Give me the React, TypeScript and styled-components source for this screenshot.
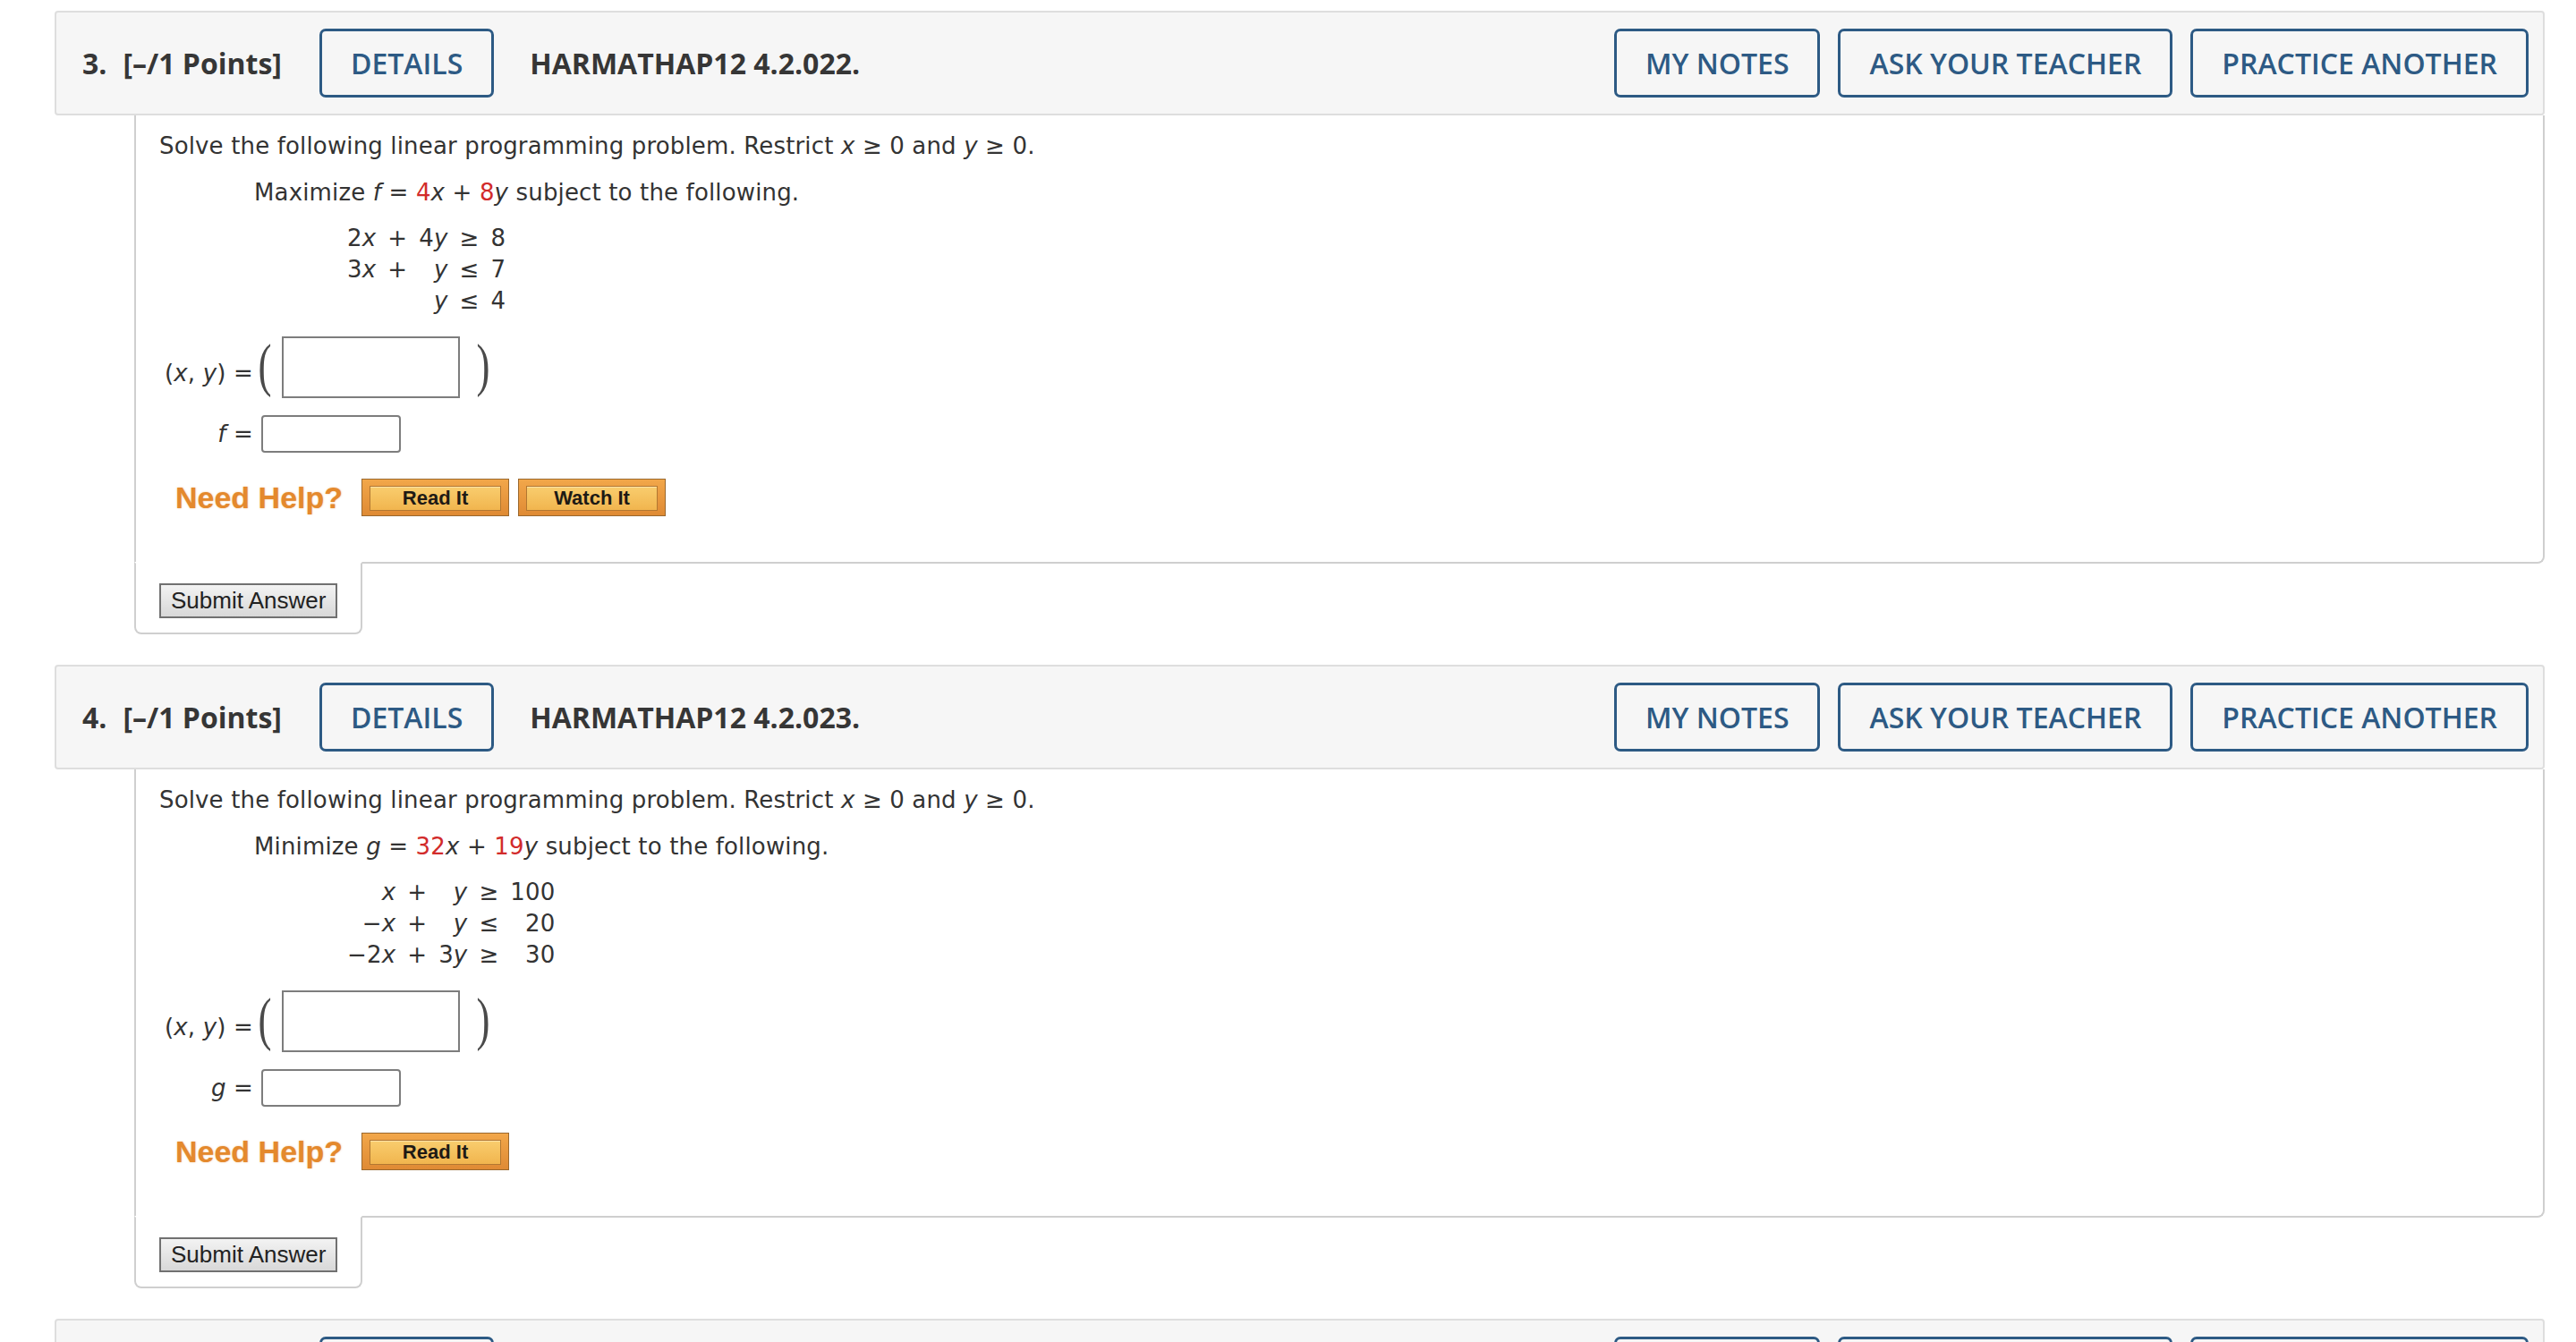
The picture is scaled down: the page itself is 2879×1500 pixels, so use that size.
import styled, { createGlobalStyle } from 'styled-components';

const GlobalStyle = createGlobalStyle`
  *, *::after, *::before {
    box-sizing: border-box;
  }
  html, body {
    margin: 0;
    padding: 0;
    background: #fff;
  }
  body {
    font-family: "DejaVu Sans", Verdana, sans-serif;
    color: #333;
  }
`;

type Row = [string, string, string, string, string];

interface ProblemData {
  number: number;
  code: string;
  goal: string;
  fn: string;
  a: string;
  b: string;
  rows: Row[];
  watch: boolean;
}

const problems: ProblemData[] = [
  {
    number: 3,
    code: 'HARMATHAP12 4.2.022.',
    goal: 'Maximize',
    fn: 'f',
    a: '4',
    b: '8',
    rows: [
      ['2x', '+', '4y', '≥', '8'],
      ['3x', '+', 'y', '≤', '7'],
      ['', '', 'y', '≤', '4'],
    ],
    watch: true,
  },
  {
    number: 4,
    code: 'HARMATHAP12 4.2.023.',
    goal: 'Minimize',
    fn: 'g',
    a: '32',
    b: '19',
    rows: [
      ['x', '+', 'y', '≥', '100'],
      ['−x', '+', 'y', '≤', '20'],
      ['−2x', '+', '3y', '≥', '30'],
    ],
    watch: false,
  },
];

// "−2x" -> "−2" + italic "x"
function Term({ text }: { text: string }) {
  const last = text.slice(-1);
  if (last === 'x' || last === 'y') {
    return (
      <>
        {text.slice(0, -1)}
        <Var>{last}</Var>
      </>
    );
  }
  return <>{text}</>;
}

function QuestionHeader({ number, code }: { number: number; code: string }) {
  return (
    <Header>
      <Number>{number}.</Number>
      <Points>[–/1 Points]</Points>
      <OutlineButton>DETAILS</OutlineButton>
      <Code>{code}</Code>
      <Actions>
        <OutlineButton>MY NOTES</OutlineButton>
        <OutlineButton>ASK YOUR TEACHER</OutlineButton>
        <OutlineButton>PRACTICE ANOTHER</OutlineButton>
      </Actions>
    </Header>
  );
}

function Problem({ data }: { data: ProblemData }) {
  return (
    <Question>
      <QuestionHeader number={data.number} code={data.code} />
      <QuestionBody>
        <Statement>
          Solve the following linear programming problem. Restrict <Var>x</Var> ≥ 0 and{' '}
          <Var>y</Var> ≥ 0.
        </Statement>
        <Goal>
          {data.goal} <Var>{data.fn}</Var> = <Coef>{data.a}</Coef>
          <Var>x</Var> + <Coef>{data.b}</Coef>
          <Var>y</Var> subject to the following.
        </Goal>
        <Constraints>
          {data.rows.map((row, r) =>
            row.map((cell, c) => (
              <Cell key={`${r}-${c}`} $op={c === 1 || c === 3}>
                <Term text={cell} />
              </Cell>
            )),
          )}
        </Constraints>
        <AnswerGrid>
          <Label $drop>
            (<Var>x</Var>, <Var>y</Var>) =
          </Label>
          <PointRow>
            <Paren>(</Paren>
            <PointBox />
            <Paren $close>)</Paren>
          </PointRow>
          <Label>
            <Var>{data.fn}</Var> =
          </Label>
          <ValueBox />
        </AnswerGrid>
        <HelpRow>
          <NeedHelp>Need Help?</NeedHelp>
          <HelpButton>
            <HelpFace>Read It</HelpFace>
          </HelpButton>
          {data.watch && (
            <HelpButton>
              <HelpFace>Watch It</HelpFace>
            </HelpButton>
          )}
        </HelpRow>
      </QuestionBody>
      <SubmitTab>
        <SubmitButton>Submit Answer</SubmitButton>
      </SubmitTab>
    </Question>
  );
}

function App() {
  return (
    <>
      <GlobalStyle />
      <Page>
        {problems.map((p) => (
          <Problem key={p.number} data={p} />
        ))}
        <QuestionHeader number={5} code="HARMATHAP12 4.2.024." />
      </Page>
    </>
  );
}

export default App;

const Page = styled.div`
  padding: 12px 35px 0 61px;
`;

const Question = styled.section`
  margin-bottom: 34px;
`;

const Header = styled.div`
  display: flex;
  align-items: center;
  height: 117px;
  padding: 0 16px 0 29px;
  background: #f6f6f6;
  border: 2px solid #dedede;
  border-radius: 4px;
  font-family: "Open Sans", "DejaVu Sans", sans-serif;
  font-size: 32px;
  color: #363636;
`;

const Number = styled.span`
  font-weight: 700;
  margin-right: 18px;
`;

const Points = styled.span`
  font-weight: 700;
  margin-right: 42px;
`;

const Code = styled.span`
  font-weight: 700;
  margin-left: 40px;
`;

const Actions = styled.div`
  display: flex;
  gap: 20px;
  margin-left: auto;
`;

const OutlineButton = styled.button`
  height: 77px;
  padding: 0 32px;
  border: 3px solid #2d5a84;
  border-radius: 7px;
  background: transparent;
  font-family: "Open Sans", "DejaVu Sans", sans-serif;
  font-size: 32px;
  font-weight: 600;
  color: #2d5a84;
  white-space: nowrap;
`;

const QuestionBody = styled.div`
  margin-left: 89px;
  padding: 16px 26px 51px;
  border: 2px solid #cfcfcf;
  border-top: 0;
  border-bottom-right-radius: 8px;
  font-size: 26px;
  letter-spacing: 0.15px;
  color: #333;
`;

const Statement = styled.p`
  margin: 0;
  line-height: 36px;
`;

const Goal = styled.p`
  margin: 16px 0 0 106px;
  line-height: 36px;
`;

const Var = styled.i`
  font-style: italic;
`;

const Coef = styled.span`
  color: #d22b2b;
`;

const Constraints = styled.div`
  display: grid;
  grid-template-columns: repeat(5, auto);
  justify-content: start;
  column-gap: 13px;
  margin: 16px 0 0 210px;
  line-height: 35px;
`;

const Cell = styled.span<{ $op?: boolean }>`
  justify-self: ${(p) => (p.$op ? 'center' : 'end')};
  white-space: nowrap;
`;

const AnswerGrid = styled.div`
  display: grid;
  grid-template-columns: auto auto;
  justify-content: start;
  align-items: center;
  column-gap: 6px;
  row-gap: 19px;
  margin: 22px 0 0 6px;
`;

const Label = styled.span<{ $drop?: boolean }>`
  justify-self: end;
  white-space: nowrap;
  line-height: 36px;
  padding-top: ${(p) => (p.$drop ? '12px' : '0')};
`;

const PointRow = styled.div`
  display: flex;
  align-items: center;
`;

const Paren = styled.span<{ $close?: boolean }>`
  display: block;
  width: 12px;
  margin-left: ${(p) => (p.$close ? '20px' : '1px')};
  font-family: "Liberation Serif", "Times New Roman", serif;
  font-size: 36px;
  line-height: 36px;
  color: #4a4a4a;
  transform: translateY(-3px) scale(1.25, 1.8);
`;

const PointBox = styled.div`
  width: 199px;
  height: 69px;
  margin-left: 13px;
  border: 2px solid #7d7d7d;
  background: #fff;
`;

const ValueBox = styled.div`
  width: 156px;
  height: 42px;
  margin-left: 3px;
  border: 2px solid #7d7d7d;
  border-radius: 4px;
  background: #fff;
`;

const HelpRow = styled.div`
  display: flex;
  align-items: center;
  margin: 29px 0 0 18px;
`;

const NeedHelp = styled.span`
  margin-right: 21px;
  font-family: "Liberation Sans", Arial, sans-serif;
  font-size: 34px;
  font-weight: 700;
  letter-spacing: 0;
  color: #e4892d;
  text-shadow: 0 0 2px rgba(228, 137, 45, 0.55);
`;

const HelpButton = styled.button`
  width: 165px;
  height: 42px;
  padding: 7px 8px 5px;
  border: 1px solid #9a682e;
  background: linear-gradient(#f2a74a, #df8a34);
  & + & {
    margin-left: 10px;
  }
`;

const HelpFace = styled.span`
  display: flex;
  align-items: center;
  justify-content: center;
  height: 100%;
  border: 1px solid #b27731;
  background: linear-gradient(#f9cd6e, #f1b54e);
  box-shadow: inset 0 1px 0 #fde3a6;
  font-family: "Liberation Sans", Arial, sans-serif;
  font-size: 22px;
  font-weight: 700;
  letter-spacing: 0;
  color: #1e1a15;
`;

const SubmitTab = styled.div`
  width: fit-content;
  margin: -2px 0 0 89px;
  padding: 22px 26px 16px;
  border: 2px solid #cfcfcf;
  border-top-color: #fff;
  border-radius: 0 0 8px 8px;
  background: #fff;
`;

const SubmitButton = styled.button`
  display: block;
  height: 39px;
  padding: 0 11px;
  border: 2px solid #717171;
  border-radius: 0;
  background: linear-gradient(#f3f3f3, #d8d8d8);
  font-family: "Liberation Sans", Arial, sans-serif;
  font-size: 26px;
  color: #222;
`;
